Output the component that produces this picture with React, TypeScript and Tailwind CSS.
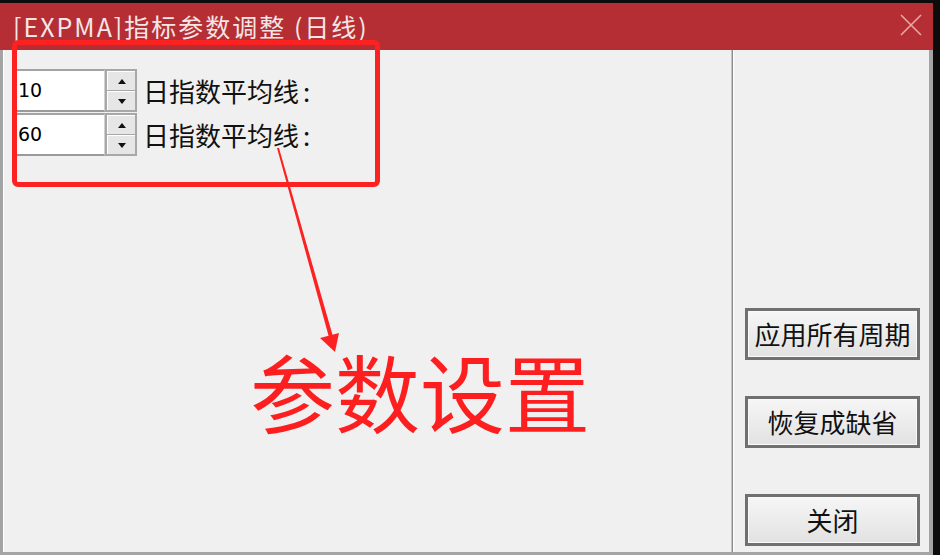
import React from "react";

const cjk = '"Noto Sans CJK SC", "Noto Sans", sans-serif';

function Spin({ value }: { value: string }) {
  return (
    <div className="flex h-[43px] items-stretch">
      <div
        className="w-[90px] bg-white border-t-[2px] border-t-[#a3a3a3] border-b-[2px] border-b-[#9a9a9a] border-r border-r-[#d0d0d0] flex items-center pl-[3px] text-[19px] text-black"
        style={{ fontFamily: '"DejaVu Sans", sans-serif' }}
      >
        {value}
      </div>
      <div className="w-[32px] flex flex-col border-[2px] border-[#a8a8a8] bg-[#a8a8a8] gap-[1px]">
        <div className="flex-1 bg-[#e6e6e6] border-t border-l border-white flex items-center justify-center">
          <svg width="8" height="5" viewBox="0 0 8 5">
            <polygon points="4,0 8,5 0,5" fill="#111" />
          </svg>
        </div>
        <div className="flex-1 bg-[#e6e6e6] border-t border-l border-white flex items-center justify-center">
          <svg width="8" height="5" viewBox="0 0 8 5">
            <polygon points="0,0 8,0 4,5" fill="#111" />
          </svg>
        </div>
      </div>
    </div>
  );
}

function Btn({ label }: { label: string }) {
  return (
    <div className="w-[175px] h-[52px] border-[3px] border-[#707070] bg-gradient-to-b from-[#f6f6f6] to-[#e2e2e2] flex items-center justify-center text-[26px] text-[#111] leading-none">
      <span className="border border-[#fafafa] w-full h-full flex items-center justify-center">{label}</span>
    </div>
  );
}

function Label() {
  return (
    <span className="text-[26px] leading-none text-[#111]">
      日指数平均线<span className="ml-[4px]">:</span>
    </span>
  );
}

export default function App() {
  return (
    <div
      className="relative w-[940px] h-[555px] bg-[#0c0c0c] overflow-hidden"
      style={{ fontFamily: cjk }}
    >
      <div className="h-[3px]" />
      <div className="w-[933px] h-[552px] flex flex-col">
        <div className="h-[47px] bg-[#b52e33] flex items-center justify-between pl-[13px] pr-[10px]">
          <span className="text-[25px] tracking-[2px] leading-none text-[#f4e6e6]">[EXPMA]指标参数调整 (日线)</span>
          <svg width="24" height="24" viewBox="0 0 24 24" className="mb-[3px]">
            <path d="M2 2 L22 22 M22 2 L2 22" stroke="#eaa7a9" strokeWidth="1.6" fill="none" />
          </svg>
        </div>
        <div className="flex-1 flex bg-[#f0f0f0] border-l-[3px] border-l-[#a4a4a4] border-b-[3px] border-b-[#a4a4a4] border-r-[4px] border-r-[#a4a4a4]">
          <div className="w-[728px] border-l border-l-white pt-[19px] pl-[11px] flex flex-col gap-[1px]">
            <div className="flex items-center gap-[6px]">
              <Spin value="10" />
              <Label />
            </div>
            <div className="flex items-center gap-[6px]">
              <Spin value="60" />
              <Label />
            </div>
          </div>
          <div className="w-[3px] flex">
            <div className="w-[1px] bg-[#c4c4c4]" />
            <div className="w-[1px] bg-[#8a8a8a]" />
            <div className="w-[1px] bg-white" />
          </div>
          <div className="flex-1 flex flex-col pl-[11px] pt-[258px]">
            <Btn label="应用所有周期" />
            <div className="mt-[36px]">
              <Btn label="恢复成缺省" />
            </div>
            <div className="mt-[46px]">
              <Btn label="关闭" />
            </div>
          </div>
        </div>
      </div>

      {/* annotation overlay */}
      <div className="absolute left-[12px] top-[40px] w-[368px] h-[147px] border-[5px] border-[#fd2222] rounded-[6px]" />
      <svg className="absolute left-0 top-0" width="940" height="555" viewBox="0 0 940 555">
        <polygon points="277,148 279,148 334,340 330,341" fill="#fd2222" />
        <polygon points="335,352 320,338 339,333" fill="#fd2222" />
      </svg>
      <div className="absolute left-[250px] top-[347px] text-[85px] leading-none text-[#fd1f1f]">
        参数设置
      </div>
    </div>
  );
}
